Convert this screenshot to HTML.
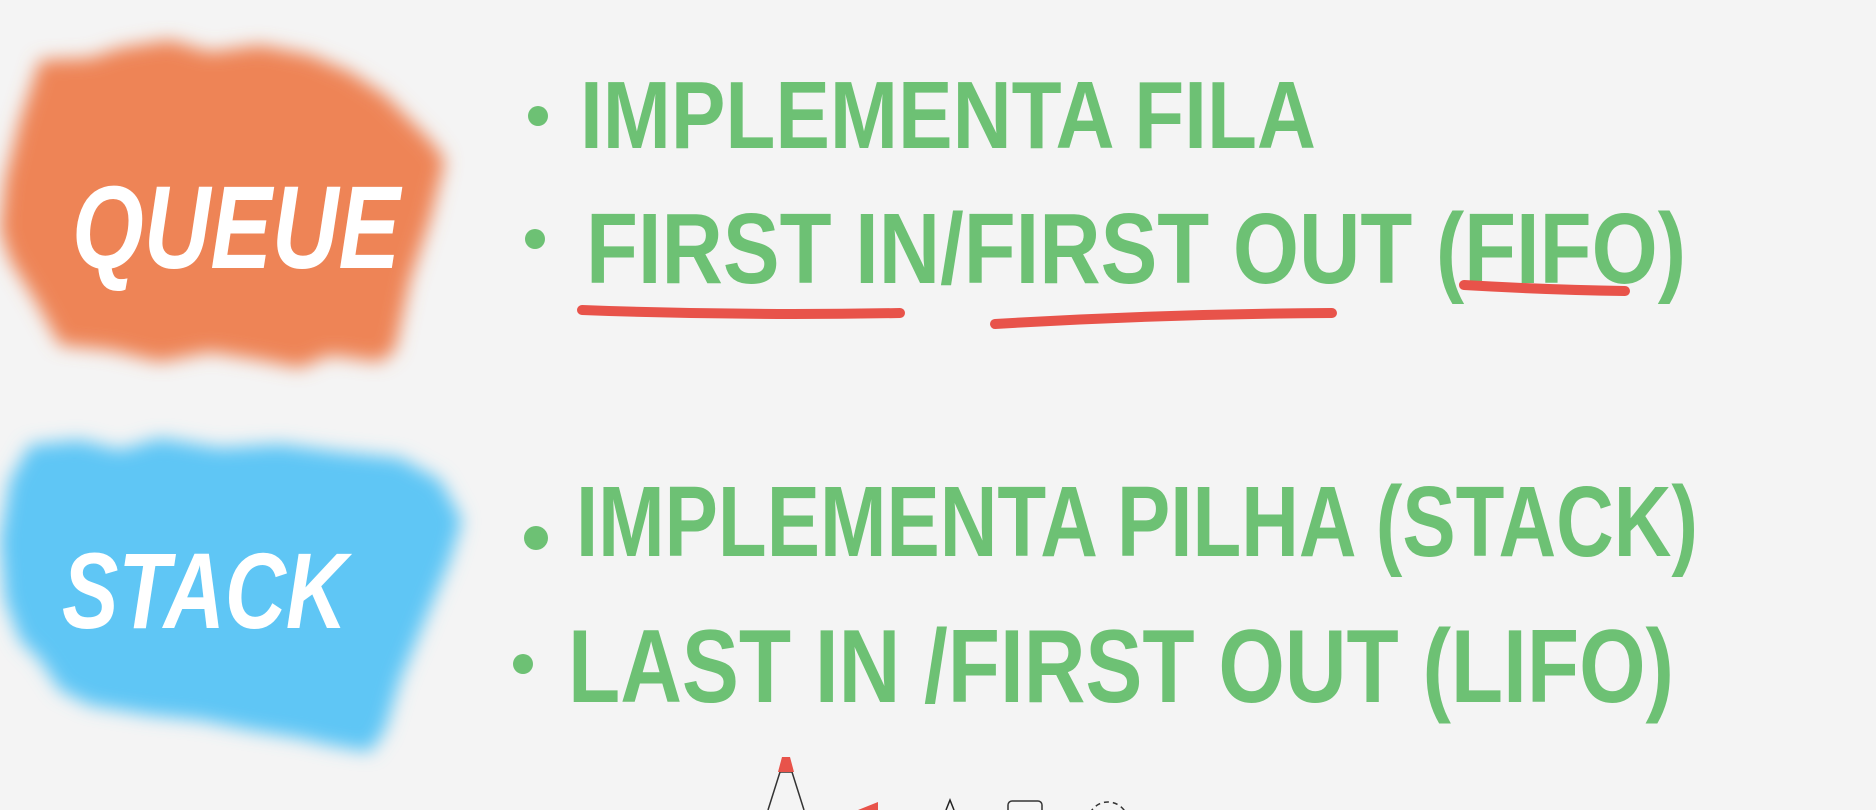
<!DOCTYPE html>
<html><head><meta charset="utf-8"><style>
html,body{margin:0;padding:0;background:#f4f4f4;width:1876px;height:810px;overflow:hidden}
svg{display:block}
text{font-family:"Liberation Sans",sans-serif;font-weight:bold}
</style></head><body>
<svg width="1876" height="810" viewBox="0 0 1876 810" xmlns="http://www.w3.org/2000/svg">
<defs>
<filter id="b" x="-10%" y="-10%" width="120%" height="120%"><feGaussianBlur stdDeviation="9"/></filter>
</defs>
<rect width="1876" height="810" fill="#f4f4f4"/>
<path d="M40 60 L90 58 L120 48 L170 40 L210 52 L260 45 L310 55 L350 72 L385 95 L430 140 L445 160 L430 220 L410 280 L395 350 L380 362 L330 355 L300 368 L260 360 L210 352 L160 362 L110 350 L60 345 L35 300 L10 260 L0 230 L5 180 L20 120 Z" fill="#ee8456" filter="url(#b)"/>
<path d="M30 445 L80 440 L120 450 L160 438 L220 448 L280 444 L340 452 L400 458 L440 480 L462 520 L450 560 L425 620 L400 680 L385 730 L370 752 L330 745 L300 738 L250 730 L200 720 L150 715 L90 705 L60 690 L40 660 L20 640 L5 600 L0 540 L10 480 Z" fill="#5fc6f5" filter="url(#b)"/>
<text x="72" y="268" font-size="118" fill="#fff" textLength="328" lengthAdjust="spacingAndGlyphs" font-style="italic">QUEUE</text>
<text x="62" y="628" font-size="108" fill="#fff" textLength="285" lengthAdjust="spacingAndGlyphs" font-style="italic">STACK</text>
<g fill="#6dc174">
<circle cx="538" cy="116" r="10"/>
<circle cx="535" cy="239" r="10"/>
<circle cx="536" cy="538" r="12"/>
<circle cx="523" cy="664" r="10"/>
<text x="580" y="148" font-size="96" textLength="736" lengthAdjust="spacingAndGlyphs">IMPLEMENTA FILA</text>
<text x="586" y="283" font-size="100" textLength="1100" lengthAdjust="spacingAndGlyphs">FIRST IN/FIRST OUT (FIFO)</text>
<text x="576" y="556" font-size="100" textLength="1122" lengthAdjust="spacingAndGlyphs">IMPLEMENTA PILHA (STACK)</text>
<text x="568" y="702" font-size="104" textLength="1106" lengthAdjust="spacingAndGlyphs">LAST IN /FIRST OUT (LIFO)</text>
</g>
<g stroke="#e8534a" stroke-width="10" stroke-linecap="round" fill="none">
<path d="M582 310 Q740 316 900 313"/>
<path d="M995 324 Q1160 314 1332 313"/>
<path d="M1464 285 Q1550 290 1625 291"/>
</g>
<path d="M768 810 L780 772 L792 772 L804 810" fill="none" stroke="#333" stroke-width="1.5"/>
<path d="M778 772 L782 757 L790 757 L794 772 Z" fill="#e8534a"/>
<path d="M858 810 L878 802 L878 810 Z" fill="#e8534a"/>
<path d="M946 810 L950 800 L954 810" fill="none" stroke="#222" stroke-width="1.5"/>
<rect x="1008" y="801" width="34" height="20" rx="4" fill="none" stroke="#333" stroke-width="1.5"/>
<circle cx="1108" cy="822" r="20" fill="none" stroke="#333" stroke-width="1.5" stroke-dasharray="5 4"/>
</svg>
</body></html>
